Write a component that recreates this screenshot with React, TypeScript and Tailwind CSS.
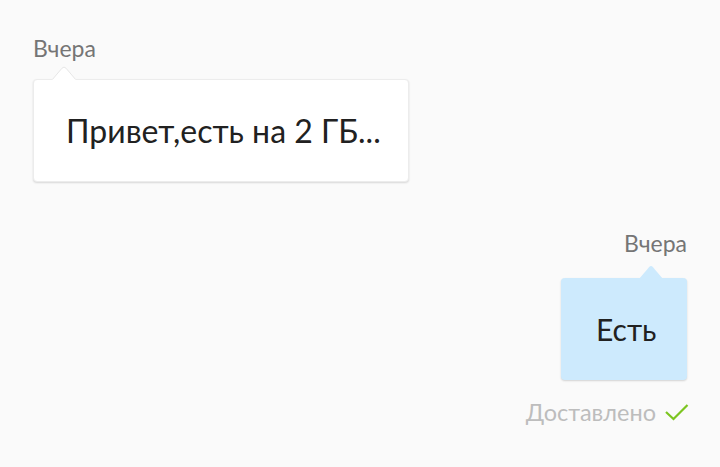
import React from "react";

function Arrow({ fill, stroke }: { fill: string; stroke?: string }) {
  return (
    <svg width="24" height="14" viewBox="0 0 24 14" className="block">
      <path d="M0 14 L10 2.2 Q12 0 14 2.2 L24 14 Z" fill={fill} />
      {stroke ? (
        <path d="M0.5 13.4 L10 2.2 Q12 0 14 2.2 L23.5 13.4" fill="none" stroke={stroke} strokeWidth="1" />
      ) : null}
    </svg>
  );
}

export default function App() {
  return (
    <div className="min-h-[467px] w-full bg-[#fafafa] px-[33px] pt-[34px] flex flex-col font-['Lato','Noto_Sans',sans-serif]">
      <div className="text-[23px] leading-[28px] text-[#757575]">Вчера</div>
      <div className="relative mt-[17px] w-[376px] h-[103px] bg-white rounded-[4px] border border-[#ececec] shadow-[0_1px_2px_rgba(0,0,0,0.14)] flex items-center pl-[32px]">
        <div className="absolute -top-[14px] left-[18px]">
          <Arrow fill="#ffffff" stroke="#e6e6e6" />
        </div>
        <span className="text-[32px] leading-[38px] text-[#212121] whitespace-nowrap">Привет,есть на 2 ГБ...</span>
      </div>

      <div className="mt-[47px] flex flex-col items-end">
        <div className="text-[23px] leading-[28px] text-[#757575]">Вчера</div>
        <div className="relative mt-[21px] w-[126px] h-[102px] bg-[#cdeafd] rounded-[4px] shadow-[0_1px_2px_rgba(0,0,0,0.16)] flex items-center pl-[35px]">
          <div className="absolute -top-[13px] right-[24px]">
            <Arrow fill="#cdeafd" />
          </div>
          <span className="text-[30px] leading-[36px] text-[#212121]">Есть</span>
        </div>
        <div className="mt-[18px] flex items-center gap-[9px] -mr-[2px]">
          <span className="text-[23.5px] leading-[28px] text-[#bdbdbd]">Доставлено</span>
          <svg width="24" height="18" viewBox="0 0 24 18" className="block">
            <path d="M1 9 L8.5 16 L22.5 2" fill="none" stroke="#7cc520" strokeWidth="2.2" />
          </svg>
        </div>
      </div>
    </div>
  );
}
